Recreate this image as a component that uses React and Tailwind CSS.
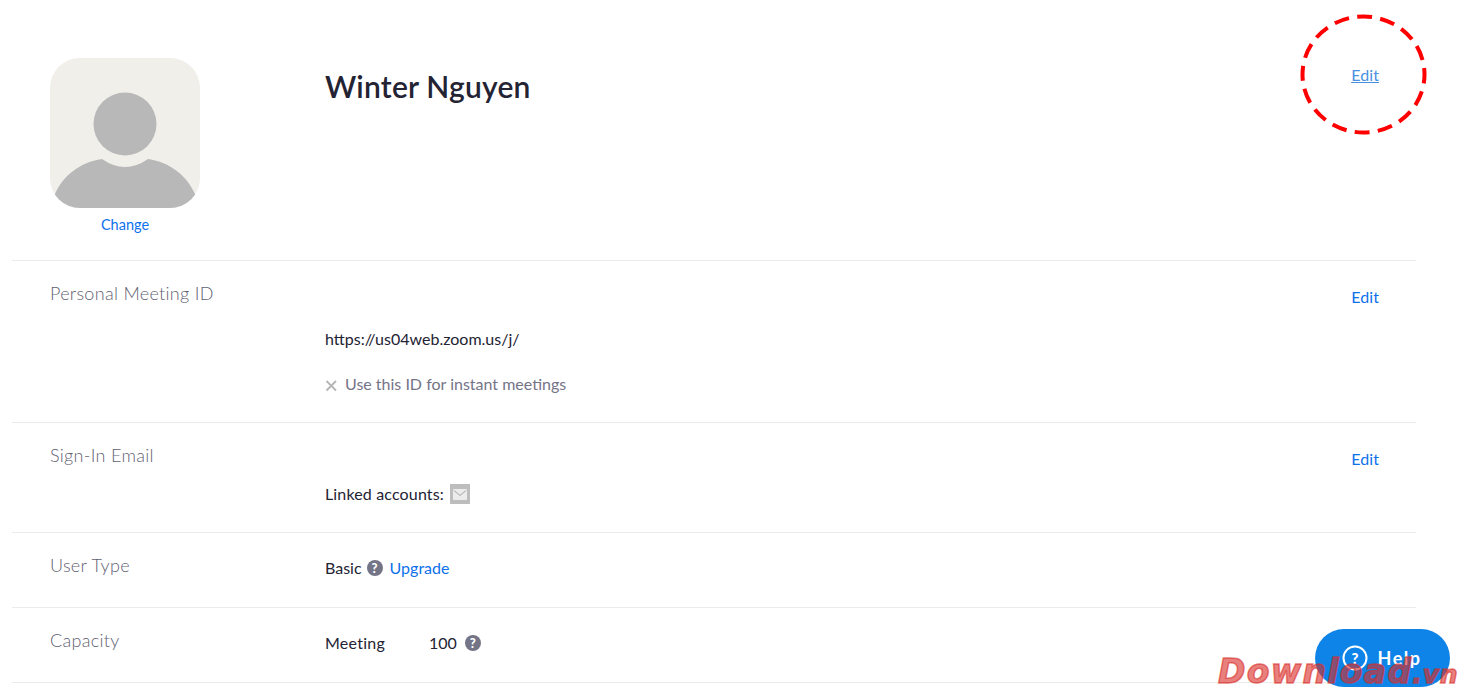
import React from 'react';

const HelpDot = () => (
  <span className="flex h-4 w-4 items-center justify-center rounded-full bg-[#747487] text-[13px] font-black leading-none text-white">?</span>
);

const Row = ({ label, edit, className, children }) => (
  <div className={`flex border-b border-[#ebebeb] pl-[38px] pr-[37px] ${className}`}>
    <div className="w-[275px] shrink-0 text-[18px] font-light leading-[24px] tracking-[0.3px] text-[#5f5f72]">{label}</div>
    <div className="flex-1 text-[16px] text-[#232333]">{children}</div>
    {edit && <a className="pt-[4px] text-[16px] leading-[24px] tracking-[0.1px] text-[#0e71eb]">Edit</a>}
  </div>
);

export default function App() {
  return (
    <div className="relative h-[695px] w-[1473px] overflow-hidden bg-white font-['Lato','Open_Sans',sans-serif]">
      <div className="ml-3 w-[1404px]">
        {/* Profile */}
        <div className="flex h-[261px] border-b border-[#ebebeb] pl-[38px] pr-[37px] pt-[58px]">
          <div className="w-[275px] shrink-0">
            <div className="h-[150px] w-[150px] overflow-hidden rounded-[30px] bg-[#f0efea]">
              <svg viewBox="0 0 150 150" className="h-full w-full">
                <circle cx="75" cy="66" r="31.5" fill="#b8b8b8" />
                <path d="M5 150 L5 136 C 13 118 30 104 52 101 Q 75 117 98 101 C 120 104 137 118 145 136 L145 150 Z" fill="#b8b8b8" />
              </svg>
            </div>
            <a className="mt-2 block w-[150px] text-center text-[14.5px] leading-[18px] text-[#0e71eb]">Change</a>
          </div>
          <h1 className="flex-1 pt-[9px] text-[30px] font-semibold leading-[38px] tracking-[0.2px] text-[#232333]">Winter Nguyen</h1>
          <a className="pt-[5px] text-[16px] leading-[24px] tracking-[0.1px] text-[#4a90e2] underline">Edit</a>
        </div>

        <Row label="Personal Meeting ID" edit className="h-[162px] pt-[20px]">
          <div className="pt-[46px] leading-[24px]">https://us04web.zoom.us/j/</div>
          <div className="mt-[21px] flex items-center gap-[7px] leading-[24px] text-[#747487]">
            <svg width="13" height="13" viewBox="0 0 13 13" className="mt-[3px] shrink-0" stroke="#b5b5b5" strokeWidth="1.8">
              <path d="M1.5 2 L11 11.5 M11 2 L1.5 11.5" />
            </svg>
            <span>Use this ID for instant meetings</span>
          </div>
        </Row>

        <Row label="Sign-In Email" edit className="h-[110px] pt-[20px]">
          <div className="mt-[35px] flex items-center gap-[6px] pt-[4px] leading-[24px]">
            <span className="tracking-[0.15px]">Linked accounts:</span>
            <span className="flex h-5 w-5 items-center justify-center bg-[#bdbdbd]">
              <svg width="14" height="11" viewBox="0 0 14 11">
                <rect width="14" height="11" rx="1" fill="#ececec" />
                <path d="M1 1.5 L7 6.5 L13 1.5" fill="none" stroke="#bdbdbd" strokeWidth="1.2" />
              </svg>
            </span>
          </div>
        </Row>

        <Row label="User Type" className="h-[75px] pt-[20px]">
          <div className="flex items-center gap-[5px] pt-[3px] leading-[24px]">
            <span>Basic</span>
            <HelpDot />
            <a className="ml-[2px] text-[#0e71eb]">Upgrade</a>
          </div>
        </Row>

        <Row label="Capacity" className="h-[75px] pt-[20px]">
          <div className="flex items-center pt-[3px] leading-[24px]">
            <span className="w-[104px] tracking-[0.25px]">Meeting</span>
            <span>100</span>
            <span className="ml-[8px]"><HelpDot /></span>
          </div>
        </Row>
      </div>

      {/* Red annotation around the first Edit link */}
      <svg className="absolute left-[1295px] top-[10px]" width="136" height="130" viewBox="0 0 136 130" fill="none">
        <ellipse cx="68.5" cy="64.5" rx="61" ry="58" stroke="#fe0000" strokeWidth="4" strokeDasharray="15 8.3" strokeDashoffset="6" />
      </svg>

      {/* Help button */}
      <div className="absolute left-[1315px] top-[629px] flex h-[58px] w-[135px] items-center justify-center gap-[10px] rounded-[29px] bg-[#0e84e8] text-white">
        <svg width="26" height="26" viewBox="0 0 26 26" fill="none" className="-ml-[2px]">
          <circle cx="13" cy="13" r="11.5" stroke="white" strokeWidth="2" />
          <text x="13" y="18.5" textAnchor="middle" fontSize="15" fontWeight="900" fill="white" fontFamily="Lato">?</text>
        </svg>
        <span className="text-[18px] font-bold tracking-[1.5px]">Help</span>
      </div>

      {/* Watermark */}
      <div className="absolute left-[1218px] top-[650px] font-['DejaVu_Sans',sans-serif] text-[33px] font-bold italic leading-[44px] tracking-[1.3px] text-[#d92b27]/60 [-webkit-text-stroke:1.5px_rgba(217,43,39,0.6)]">
        Download<span className="text-[25px] tracking-[0.8px]">.vn</span>
      </div>
    </div>
  );
}
